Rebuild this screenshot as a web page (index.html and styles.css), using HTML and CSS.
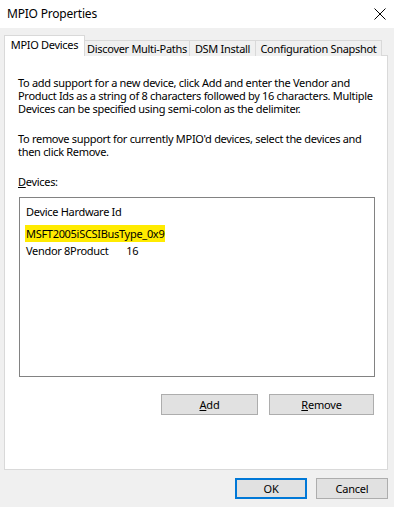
FILE: index.html
```html
<!DOCTYPE html>
<html lang="en">
<head>
    <meta charset="UTF-8">
    <meta name="viewport" content="width=device-width, initial-scale=1.0">
    <title>MPIO Properties</title>
    <link rel="stylesheet" href="styles.css">
</head>
<body>
    <div class="titlebar">
        <span class="title">MPIO Properties</span>
        <svg class="close" width="12" height="12" viewBox="0 0 12 12">
            <path d="M0.5 0.5 L11.5 11.5 M11.5 0.5 L0.5 11.5" stroke="#000" stroke-width="1" fill="none"/>
        </svg>
    </div>

    <div class="tabs">
        <div class="tab active tab-devices">MPIO Devices</div>
        <div class="tab tab-discover">Discover Multi-Paths</div>
        <div class="tab tab-dsm">DSM Install</div>
        <div class="tab tab-config">Configuration Snapshot</div>
    </div>

    <div class="panel">
        <p class="info">To add support for a new device, click Add and enter the Vendor and Product Ids as a string of 8 characters followed by 16 characters. Multiple Devices can be specified using semi-colon as the delimiter.</p>
        <p class="info">To remove support for currently MPIO'd devices, select the devices and then click Remove.</p>
        <div class="label"><u>D</u>evices:</div>

        <div class="listbox">
            <div class="list-header">Device Hardware Id</div>
            <div class="list-row"><span class="selected">MSFT2005iSCSIBusType_0x9</span></div>
            <div class="list-row">Vendor 8Product&nbsp;&nbsp;&nbsp;&nbsp;&nbsp;&nbsp;&nbsp;16</div>
        </div>

        <div class="list-actions">
            <button class="btn btn-add"><u>A</u>dd</button>
            <button class="btn btn-remove"><u>R</u>emove</button>
        </div>
    </div>

    <div class="footer">
        <button class="btn btn-footer btn-default">OK</button>
        <button class="btn btn-footer">Cancel</button>
    </div>
</body>
</html>
```

FILE: styles.css
```css
body {
    margin: 0;
    width: 394px;
    height: 507px;
    background-color: #f0f0f0;
    font-family: "Segoe UI", "Noto Sans", sans-serif;
    font-size: 11px;
    letter-spacing: -0.3px;
    color: #000;
    overflow: hidden;
}

.titlebar {
    height: 28px;
    background: white;
    display: flex;
    align-items: center;
    justify-content: space-between;
    padding: 0 8px 0 7px;
}

.title {
    font-size: 12px;
    letter-spacing: -0.2px;
    margin-top: -2px;
}

.close {
    margin-top: -1px;
}

.tabs {
    display: flex;
    align-items: flex-end;
    margin: 8px 0 0 4px;
    height: 20px;
    position: relative;
    z-index: 1;
}

.tab {
    height: 15px;
    line-height: 15px;
    border: 1px solid #d9d9d9;
    border-bottom: none;
    border-left: none;
    background: #f0f0f0;
    white-space: nowrap;
    text-align: center;
    box-sizing: content-box;
}

.tab.active {
    height: 20px;
    line-height: 18px;
    background: white;
    border-left: 1px solid #d9d9d9;
}

.tab-devices { width: 79px; }
.tab-discover { width: 104px; }
.tab-dsm { width: 65px; }
.tab-config { width: 125px; }

.panel {
    margin: -1px 6px 0 4px;
    height: 415px;
    background: white;
    border: 1px solid #d9d9d9;
    box-sizing: border-box;
    padding: 20px 13px 0 13px;
}

.info {
    margin: 0 0 17px 0;
    line-height: 13px;
}

.label {
    line-height: 13px;
    margin-top: 13px;
}

.listbox {
    margin: 9px 0 0 1px;
    width: 356px;
    height: 180px;
    border: 1px solid #828282;
    box-sizing: border-box;
    padding: 5px 0 0 5px;
}

.list-header {
    height: 22px;
    line-height: 18px;
    padding-left: 1px;
}

.list-row {
    height: 17px;
    line-height: 17px;
    padding-left: 1px;
}

.selected {
    display: inline-block;
    background: #ffeb00;
    padding: 0 1px;
    margin-left: -1px;
}

.list-actions {
    display: flex;
    justify-content: flex-end;
    gap: 11px;
    margin: 17px 0 0 0;
}

.btn {
    font-family: inherit;
    font-size: 11px;
    letter-spacing: -0.2px;
    background: #e1e1e1;
    border: 1px solid #adadad;
    height: 21px;
    padding: 0;
    color: #000;
}

.btn-add {
    width: 97px;
}

.btn-remove {
    width: 105px;
}

.footer {
    display: flex;
    justify-content: flex-end;
    gap: 9px;
    margin: 8px 6px 0 0;
}

.btn-footer {
    width: 72px;
}

.btn-default {
    border: 2px solid #0078d7;
}
```
